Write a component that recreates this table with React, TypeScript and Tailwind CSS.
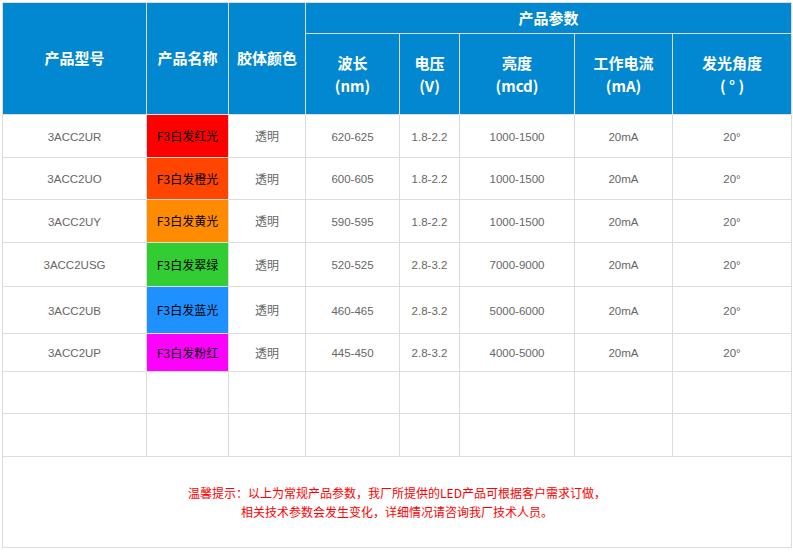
const rows = [
  { model: '3ACC2UR', name: 'F3白发红光', bg: 'bg-[#ff0000]', wave: '620-625', volt: '1.8-2.2', lum: '1000-1500', h: 'h-[43px]' },
  { model: '3ACC2UO', name: 'F3白发橙光', bg: 'bg-[#ff4500]', wave: '600-605', volt: '1.8-2.2', lum: '1000-1500', h: 'h-[42px]' },
  { model: '3ACC2UY', name: 'F3白发黄光', bg: 'bg-[#ff8c00]', wave: '590-595', volt: '1.8-2.2', lum: '1000-1500', h: 'h-[43px]' },
  { model: '3ACC2USG', name: 'F3白发翠绿', bg: 'bg-[#32cd32]', wave: '520-525', volt: '2.8-3.2', lum: '7000-9000', h: 'h-[44px]' },
  { model: '3ACC2UB', name: 'F3白发蓝光', bg: 'bg-[#1e90ff]', wave: '460-465', volt: '2.8-3.2', lum: '5000-6000', h: 'h-[47px]' },
  { model: '3ACC2UP', name: 'F3白发粉红', bg: 'bg-[#ff00ff]', wave: '445-450', volt: '2.8-3.2', lum: '4000-5000', h: 'h-[38px]' },
]

const params = [
  ['波长', '(nm)'],
  ['电压', '(V)'],
  ['亮度', '(mcd)'],
  ['工作电流', '(mA)'],
  ['发光角度', '( ° )'],
]

const cjk = "font-['Noto_Sans_CJK_SC',sans-serif]"
const num = "font-['Liberation_Sans','Noto_Sans_CJK_SC',sans-serif] text-[11.5px] text-[#666] pt-[3px]"
const td = 'border border-[#dcdcdc] text-center p-0'
const th = 'border border-[#dcdcdc] text-center p-0 font-bold text-white text-[15px]'

export default function App() {
  return (
    <div className="p-[2px] bg-white">
      <table className={`w-[789px] table-fixed border-collapse ${cjk}`}>
        <colgroup>
          <col className="w-[144px]" />
          <col className="w-[82px]" />
          <col className="w-[77px]" />
          <col className="w-[94px]" />
          <col className="w-[60px]" />
          <col className="w-[115px]" />
          <col className="w-[98px]" />
          <col className="w-[119px]" />
        </colgroup>
        <thead className="bg-[#0288d1]">
          <tr className="h-[31px]">
            <th rowSpan={2} className={th}>产品型号</th>
            <th rowSpan={2} className={th}>产品名称</th>
            <th rowSpan={2} className={th}>胶体颜色</th>
            <th colSpan={5} className={th}>产品参数</th>
          </tr>
          <tr className="h-[81px]">
            {params.map(([a, b]) => (
              <th key={a} className={`${th} leading-[23px]`}>
                <div>{a}</div>
                <div>{b}</div>
              </th>
            ))}
          </tr>
        </thead>
        <tbody>
          {rows.map(r => (
            <tr key={r.model} className={r.h}>
              <td className={`${td} ${num}`}>{r.model}</td>
              <td className={`${td} ${r.bg} text-[12px] text-black`}>{r.name}</td>
              <td className={`${td} text-[12px] text-[#666]`}>透明</td>
              <td className={`${td} ${num}`}>{r.wave}</td>
              <td className={`${td} ${num}`}>{r.volt}</td>
              <td className={`${td} ${num}`}>{r.lum}</td>
              <td className={`${td} ${num}`}>20mA</td>
              <td className={`${td} ${num}`}>20°</td>
            </tr>
          ))}
          {['h-[42px]', 'h-[43px]'].map(h => (
            <tr key={h} className={h}>
              {Array.from({ length: 8 }).map((_, i) => (
                <td key={i} className={td}></td>
              ))}
            </tr>
          ))}
          <tr className="h-[91px]">
            <td colSpan={8} className={`${td} text-[12px] leading-[19px] text-[#ff0000]`}>
              <div>温馨提示：以上为常规产品参数，我厂所提供的LED产品可根据客户需求订做，</div>
              <div>相关技术参数会发生变化，详细情况请咨询我厂技术人员。</div>
            </td>
          </tr>
        </tbody>
      </table>
    </div>
  )
}
